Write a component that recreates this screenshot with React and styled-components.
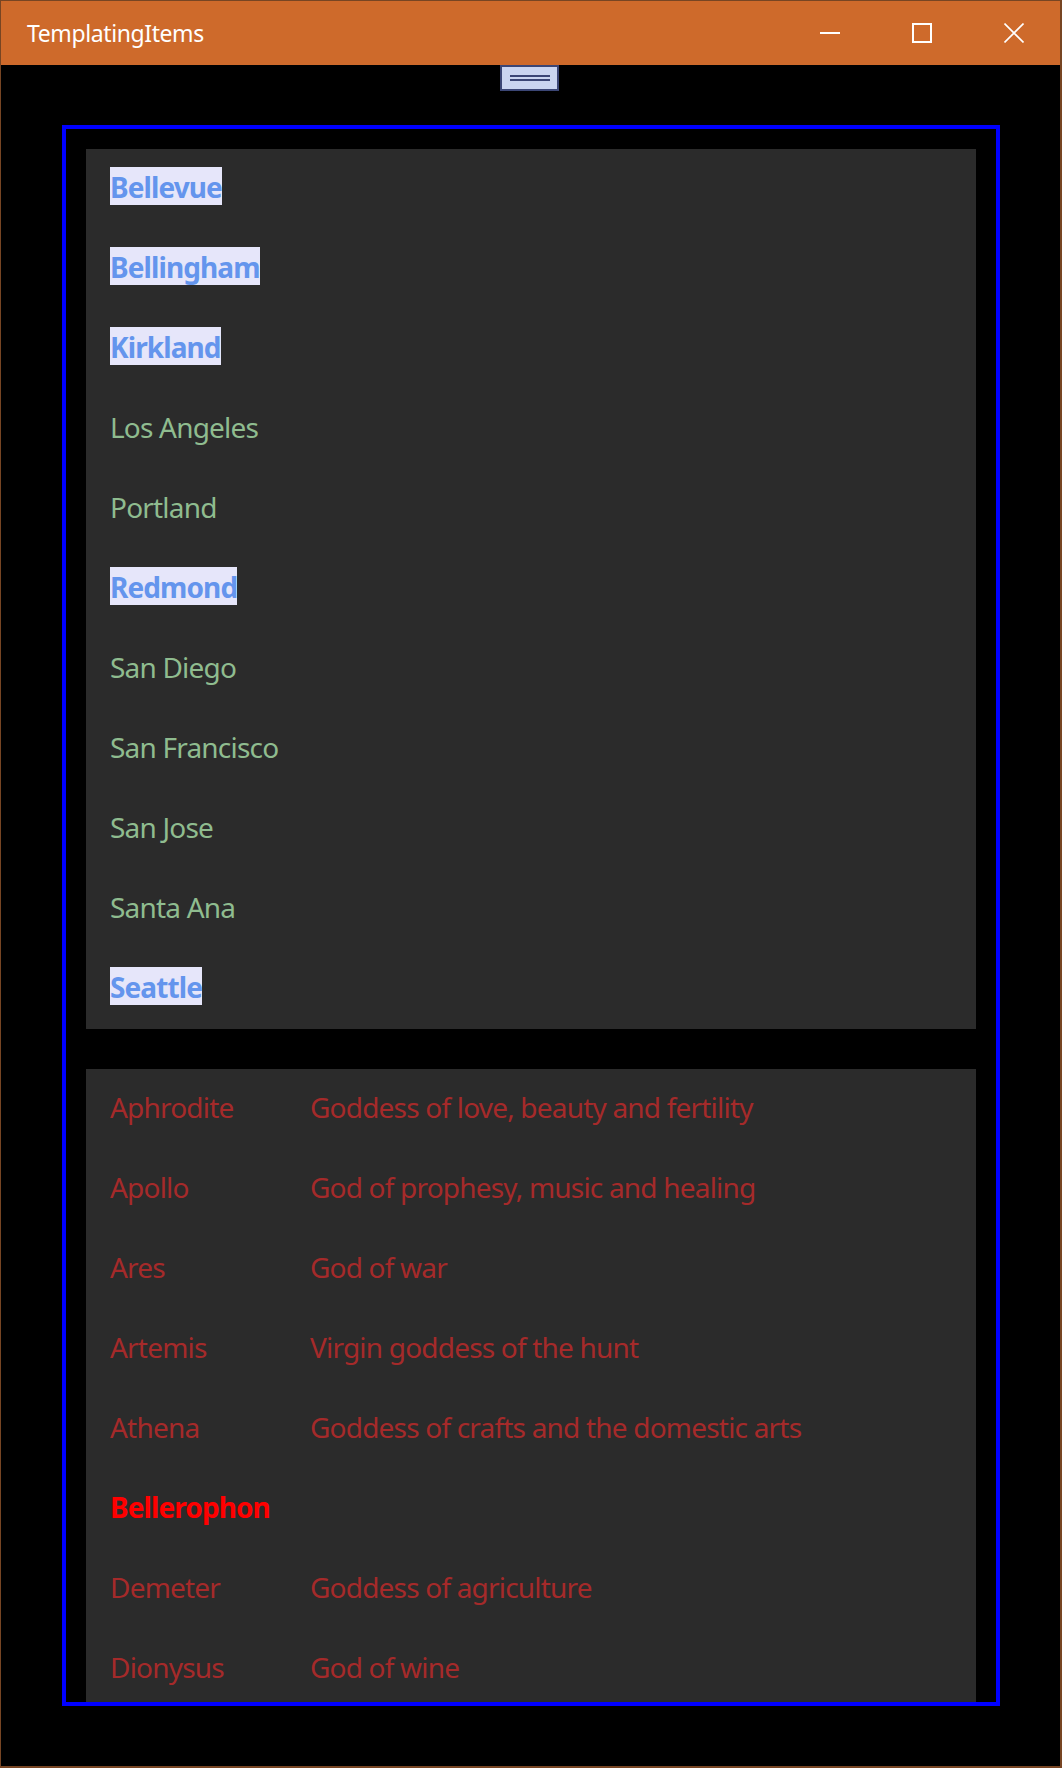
import React from "react";
import styled, { createGlobalStyle } from "styled-components";

const GlobalStyle = createGlobalStyle`
  html, body {
    margin: 0;
    padding: 0;
    background: #000;
  }
  * {
    box-sizing: border-box;
  }
`;

const Window = styled.div`
  width: 1062px;
  height: 1768px;
  display: flex;
  flex-direction: column;
  border-style: solid;
  border-color: #774523;
  border-width: 1px 2px 2px 1px;
  background: #000;
  font-family: "Noto Sans", "Open Sans", sans-serif;
  overflow: hidden;
`;

const TitleBar = styled.div`
  height: 64px;
  flex-shrink: 0;
  display: flex;
  align-items: center;
  background: #ce6a2b;
  color: #fff;
`;

const Title = styled.div`
  flex: 1;
  padding-left: 26px;
  font-size: 23px;
  letter-spacing: -0.4px;
`;

const CaptionButton = styled.div`
  width: 92px;
  height: 64px;
  display: flex;
  align-items: center;
  justify-content: center;
`;

const Content = styled.div`
  flex: 1;
  display: flex;
  flex-direction: column;
  background: #000;
`;

const Grip = styled.div`
  width: 59px;
  height: 26px;
  margin-left: 499px;
  display: flex;
  align-items: center;
  justify-content: center;
  background: #cad5f0;
  border: 2px solid #3b4675;
`;

const GripLines = styled.span`
  width: 40px;
  height: 6px;
  border-top: 2px solid #3b4675;
  border-bottom: 2px solid #3b4675;
`;

const Frame = styled.div`
  width: 938px;
  height: 1581px;
  margin: 34px 0 0 61px;
  padding: 20px 20px 0;
  border: 4px solid #0000ff;
  display: flex;
  flex-direction: column;
  gap: 40px;
  overflow: hidden;
`;

const Panel = styled.div`
  flex-shrink: 0;
  background: #2b2b2b;
`;

const Row = styled.div`
  height: 80px;
  padding: 18px 0 0 24px;
  display: grid;
  grid-template-columns: ${({ $cols }) => ($cols ? "200px 1fr" : "1fr")};
  align-items: start;
`;

const Cell = styled.span`
  justify-self: start;
  padding-top: 2px;
  font-size: 28px;
  line-height: 36px;
  letter-spacing: ${({ $bold }) => ($bold ? "-0.9px" : "-0.8px")};
  white-space: nowrap;
  color: ${({ $color }) => $color};
  font-weight: ${({ $bold }) => ($bold ? 700 : 400)};
  background: ${({ $highlight }) => ($highlight ? "#e6e6fa" : "transparent")};
`;

const cities = [
  { name: "Bellevue", wa: true },
  { name: "Bellingham", wa: true },
  { name: "Kirkland", wa: true },
  { name: "Los Angeles" },
  { name: "Portland" },
  { name: "Redmond", wa: true },
  { name: "San Diego" },
  { name: "San Francisco" },
  { name: "San Jose" },
  { name: "Santa Ana" },
  { name: "Seattle", wa: true },
];

const gods = [
  { name: "Aphrodite", desc: "Goddess of love, beauty and fertility" },
  { name: "Apollo", desc: "God of prophesy, music and healing" },
  { name: "Ares", desc: "God of war" },
  { name: "Artemis", desc: "Virgin goddess of the hunt" },
  { name: "Athena", desc: "Goddess of crafts and the domestic arts" },
  { name: "Bellerophon", hero: true },
  { name: "Demeter", desc: "Goddess of agriculture" },
  { name: "Dionysus", desc: "God of wine" },
];

const Minimize = () => (
  <svg width="20" height="20" viewBox="0 0 20 20">
    <rect x="0" y="9" width="20" height="2" fill="#fff" />
  </svg>
);

const Maximize = () => (
  <svg width="20" height="20" viewBox="0 0 20 20">
    <rect x="1" y="1" width="18" height="18" fill="none" stroke="#fff" strokeWidth="2" />
  </svg>
);

const Close = () => (
  <svg width="20" height="20" viewBox="0 0 20 20">
    <path d="M0.5 0.5 L19.5 19.5 M19.5 0.5 L0.5 19.5" stroke="#fff" strokeWidth="1.6" />
  </svg>
);

const App = () => {
  return (
    <>
      <GlobalStyle />
      <Window>
        <TitleBar>
          <Title>TemplatingItems</Title>
          <CaptionButton>
            <Minimize />
          </CaptionButton>
          <CaptionButton>
            <Maximize />
          </CaptionButton>
          <CaptionButton>
            <Close />
          </CaptionButton>
        </TitleBar>
        <Content>
          <Grip>
            <GripLines />
          </Grip>
          <Frame>
            <Panel>
              {cities.map((c) => (
                <Row key={c.name}>
                  {c.wa ? (
                    <Cell $bold $highlight $color="#6495ed">
                      {c.name}
                    </Cell>
                  ) : (
                    <Cell $color="#8fbc8f">{c.name}</Cell>
                  )}
                </Row>
              ))}
            </Panel>
            <Panel>
              {gods.map((g) => (
                <Row key={g.name} $cols={!g.hero}>
                  {g.hero ? (
                    <Cell $bold $color="#ff0000">
                      {g.name}
                    </Cell>
                  ) : (
                    <>
                      <Cell $color="#a52a2a">{g.name}</Cell>
                      <Cell $color="#a52a2a">{g.desc}</Cell>
                    </>
                  )}
                </Row>
              ))}
            </Panel>
          </Frame>
        </Content>
      </Window>
    </>
  );
};

export default App;
